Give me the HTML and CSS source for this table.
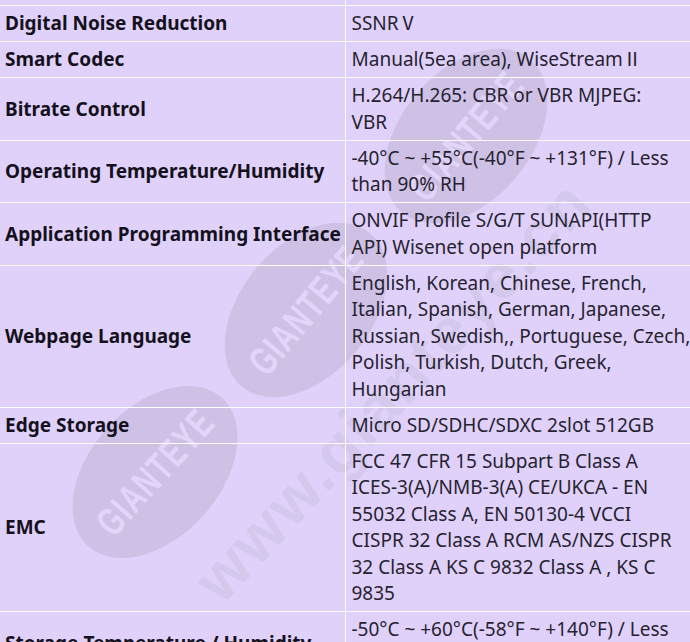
FILE: index.html
```html
<!DOCTYPE html>
<html lang="en">
<head>
<meta charset="utf-8">
<title>Specifications</title>
<link rel="stylesheet" href="styles.css">
</head>
<body>
<svg class="watermark" width="690" height="642" viewBox="0 0 690 642" aria-hidden="true">
  <g class="wm-badge" transform="translate(466 136) rotate(-50)">
    <ellipse cx="0" cy="0" rx="100" ry="65"></ellipse>
    <text x="0" y="0" transform="scale(0.7 1)">GIANTEYE</text>
  </g>
  <g class="wm-badge" transform="translate(306 310) rotate(-50)">
    <ellipse cx="0" cy="0" rx="100" ry="65"></ellipse>
    <text x="0" y="0" transform="scale(0.7 1)">GIANTEYE</text>
  </g>
  <g class="wm-badge" transform="translate(155 472) rotate(-48)">
    <ellipse cx="0" cy="0" rx="100" ry="65"></ellipse>
    <text x="0" y="0" transform="scale(0.7 1)">GIANTEYE</text>
  </g>
  <text class="wm-url" transform="translate(222 606) rotate(-47)">www.gianteye.cn</text>
</svg>
<main class="sheet">
  <table class="spec">
    <colgroup><col class="col-key"><col class="col-val"></colgroup>
    <tbody>
      <tr><th>Wide Dynamic Range</th><td>120dB</td></tr>
      <tr><th>Digital Noise Reduction</th><td>SSNRⅤ</td></tr>
      <tr><th>Smart Codec</th><td>Manual(5ea area), WiseStreamⅡ</td></tr>
      <tr><th>Bitrate Control</th><td>H.264/H.265: CBR or VBR MJPEG:<br>VBR</td></tr>
      <tr><th>Operating Temperature/Humidity</th><td>-40°C ~ +55°C(-40°F ~ +131°F) / Less<br>than 90% RH</td></tr>
      <tr><th>Application Programming Interface</th><td>ONVIF Profile S/G/T SUNAPI(HTTP<br>API) Wisenet open platform</td></tr>
      <tr><th>Webpage Language</th><td>English, Korean, Chinese, French,<br>Italian, Spanish, German, Japanese,<br>Russian, Swedish,, Portuguese, Czech,<br>Polish, Turkish, Dutch, Greek,<br>Hungarian</td></tr>
      <tr><th>Edge Storage</th><td>Micro SD/SDHC/SDXC 2slot 512GB</td></tr>
      <tr><th>EMC</th><td>FCC 47 CFR 15 Subpart B Class A<br>ICES-3(A)/NMB-3(A) CE/UKCA - EN<br>55032 Class A, EN 50130-4 VCCI<br>CISPR 32 Class A RCM AS/NZS CISPR<br>32 Class A KS C 9832 Class A , KS C<br>9835</td></tr>
      <tr><th>Storage Temperature / Humidity</th><td>-50°C ~ +60°C(-58°F ~ +140°F) / Less<br>than 90% RH</td></tr>
    </tbody>
  </table>
</main>
</body>
</html>
```
FILE: styles.css
```css
html, body {
  margin: 0;
  padding: 0;
}

body {
  position: relative;
  width: 690px;
  height: 642px;
  overflow: hidden;
  background: #e0d1fa;
  font-family: "Noto Sans", "Noto Sans CJK SC", sans-serif;
  font-size: 19px;
  line-height: 26.5px;
}

.watermark {
  position: absolute;
  top: 0;
  left: 0;
  z-index: 0;
  pointer-events: none;
}

.wm-badge ellipse {
  fill: #cec1e5;
}

.wm-badge text {
  fill: #e2d5f9;
  font-family: "Liberation Sans", sans-serif;
  font-weight: 700;
  font-size: 40px;
  letter-spacing: 2px;
  text-anchor: middle;
  dominant-baseline: central;
}

.wm-url {
  fill: #d5c8ed;
  font-family: "Liberation Sans", sans-serif;
  font-weight: 700;
  font-size: 64px;
  letter-spacing: 2px;
}

.sheet {
  position: relative;
  z-index: 1;
  margin-top: -30px;
}

.spec {
  width: 690px;
  table-layout: fixed;
  border-collapse: collapse;
}

.col-key {
  width: 345px;
}

.spec th,
.spec td {
  padding: 4.25px 2px 4.25px 6px;
  border-bottom: 1px solid #ffffff;
  vertical-align: middle;
  text-align: left;
}

.spec th {
  padding-left: 5px;
  border-right: 1px solid #ffffff;
  font-weight: 700;
  color: #14111c;
}

.spec td {
  color: #262330;
  white-space: nowrap;
}
```
